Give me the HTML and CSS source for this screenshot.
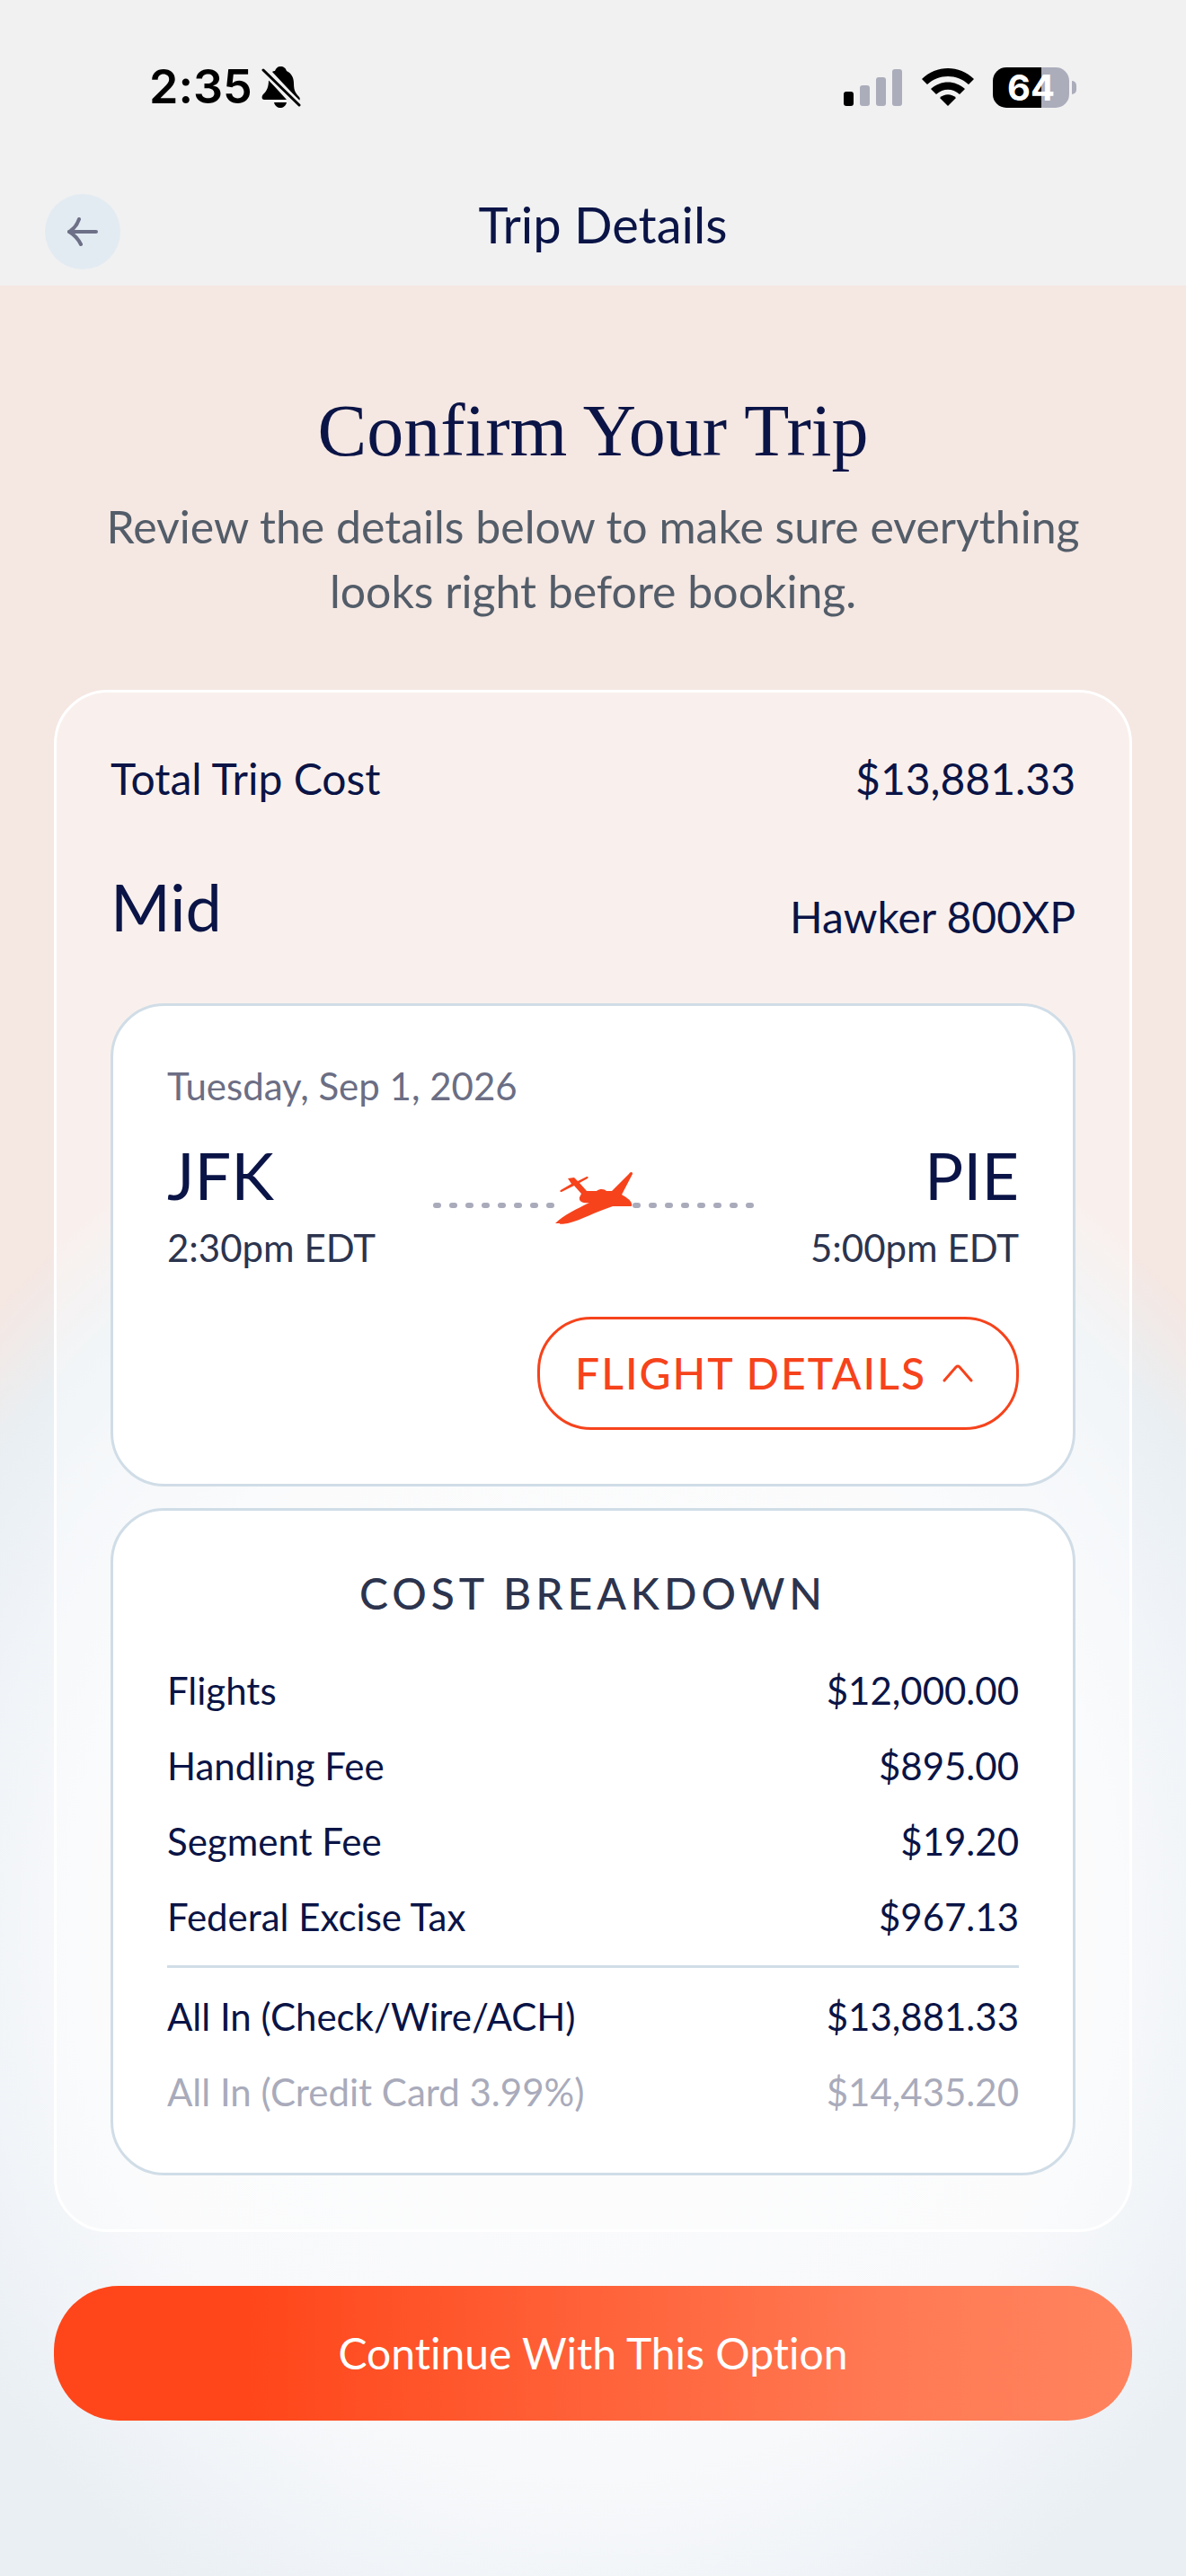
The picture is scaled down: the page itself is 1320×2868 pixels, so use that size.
FILE: index.html
```
<!DOCTYPE html>
<html lang="en">
<head>
    <meta charset="UTF-8">
    <meta name="viewport" content="width=device-width, initial-scale=1.0">
    <title>Trip Details</title>
    <link rel="stylesheet" href="styles.css">
</head>
<body>
    <header class="header">
        <div class="status-bar">
            <div class="status-left">
                <span class="time">2:35</span>
                <svg class="bell" viewBox="0 0 44 46" aria-label="Silent mode">
                    <path d="M21 0c4 0 6 2 7 5 6 3 8 8 8 14 0 8 2 11 6 15 1 1 1 3 0 4L12 6c1-1 2-1 3-1 1-3 3-5 6-5z"/>
                    <path d="M8 15l20 22H3c-3 0-3-4-1-6 4-4 6-8 6-16z"/>
                    <path d="M14 40h14c-1 4-4 6-7 6s-6-2-7-6z"/>
                    <path d="M2 4l40 39" stroke="#f1f1f1" stroke-width="8"/>
                    <path d="M2 4l40 39" stroke="#000" stroke-width="3" stroke-linecap="round"/>
                </svg>
            </div>
            <div class="status-right">
                <svg class="signal" viewBox="0 0 66 42" aria-label="Signal">
                    <rect x="0" y="26" width="11" height="16" rx="3"/>
                    <g fill="#abadbb">
                        <rect x="18" y="19" width="11" height="23" rx="3"/>
                        <rect x="36" y="10" width="11" height="32" rx="3"/>
                        <rect x="54" y="1" width="11" height="41" rx="3"/>
                    </g>
                </svg>
                <svg class="wifi" viewBox="0 0 58 42" aria-label="Wi-Fi">
                    <path d="M0 12C16-4 42-4 58 12l-6 6C39 6 19 6 6 18z"/>
                    <path d="M10 23c11-10 27-10 38 0l-6 6c-8-7-18-7-26 0z"/>
                    <path d="M20 33c5-5 13-5 18 0l-9 9z"/>
                </svg>
                <div class="battery"><span class="battery-level">64</span></div>
            </div>
        </div>
        <nav class="nav">
            <button class="back" type="button" aria-label="Back">
                <svg viewBox="0 0 34 32">
                    <path d="M32 16H2M13 2C11 8 7 13 2 16c5 3 10 8 13 14"/>
                </svg>
            </button>
            <h1 class="nav-title">Trip Details</h1>
        </nav>
    </header>

    <main class="page">
        <h2 class="heading">Confirm Your Trip</h2>
        <p class="intro">Review the details below to make sure everything looks right before booking.</p>

        <section class="trip">
            <div class="row total">
                <span>Total Trip Cost</span>
                <span>$13,881.33</span>
            </div>
            <div class="row aircraft">
                <span class="large">Mid</span>
                <span>Hawker 800XP</span>
            </div>

            <div class="card flight">
                <div class="date">Tuesday, Sep 1, 2026</div>
                <div class="route">
                    <div class="stop">
                        <span class="large">JFK</span>
                        <span class="stop-time">2:30pm EDT</span>
                    </div>
                    <svg class="plane" viewBox="0 0 360 60" aria-label="to">
                        <g fill="none" stroke="#a9abbb" stroke-width="6" stroke-linecap="round" stroke-dasharray="3 15">
                            <path d="M5 37h130M227 37h130"/>
                        </g>
                        <path fill="#f6431c" d="M138 57C148 47 162 41 176 34c-7 1-12-1-11-6l2-4-8-9-14 7c-2 0-2-1-1-2l12-7-4-6 7-1 4 4 10-5c2 0 2 1 1 2l-9 5 8 9h11c4-3 9-2 11 0h6l19-19c1-2 4-3 4 0l-12 23c5 3 10 6 11 10s-1 3-3 3h-18c-19 6-34 15-50 19-5 1-10 1-9 0z"/>
                    </svg>
                    <div class="stop stop-end">
                        <span class="large">PIE</span>
                        <span class="stop-time">5:00pm EDT</span>
                    </div>
                </div>
                <button class="details" type="button">
                    FLIGHT DETAILS
                    <svg viewBox="0 0 34 20"><path d="M2 18L15 3q2-2 4 0l13 15"/></svg>
                </button>
            </div>

            <div class="card costs">
                <h3 class="costs-title">COST BREAKDOWN</h3>
                <table class="costs-table">
                    <tbody>
                        <tr><th scope="row">Flights</th><td>$12,000.00</td></tr>
                        <tr><th scope="row">Handling Fee</th><td>$895.00</td></tr>
                        <tr><th scope="row">Segment Fee</th><td>$19.20</td></tr>
                        <tr><th scope="row">Federal Excise Tax</th><td>$967.13</td></tr>
                    </tbody>
                </table>
                <table class="costs-table totals">
                    <tbody>
                        <tr><th scope="row">All In (Check/Wire/ACH)</th><td>$13,881.33</td></tr>
                        <tr class="muted"><th scope="row">All In (Credit Card 3.99%)</th><td>$14,435.20</td></tr>
                    </tbody>
                </table>
            </div>
        </section>

        <button class="continue" type="button">Continue With This Option</button>
    </main>
</body>
</html>
```
FILE: styles.css
```
* {
    box-sizing: border-box;
}
body {
    margin: 0;
    min-height: 100vh;
    font-family: Lato, "Open Sans", sans-serif;
    font-size: 48px;
    line-height: 60px;
    font-variant-ligatures: none;
    color: #0a1446;
    background:
        radial-gradient(70vw 76vw at 50% 75%, #fcfcfd 0, #f8f9fb 60%, #eff3f7 78%, #e9eff3 88%, rgba(233, 239, 243, 0) 100%),
        linear-gradient(#f5e7e2 53%, #e9eff3 63%);
}
h1, h2, h3, p {
    margin: 0;
    font-weight: normal;
}
button {
    font: inherit;
    cursor: pointer;
}

/* header */
.header {
    background: #f1f1f1;
    padding-bottom: 18px;
}
.status-bar {
    display: flex;
    justify-content: space-between;
    align-items: flex-start;
    height: 216px;
    padding: 64px 130px 0 166px;
    font-family: Inter, sans-serif;
    color: #000;
}
.status-left, .status-right {
    display: flex;
    align-items: center;
    height: 66px;
}
.status-left {
    gap: 10px;
}
.status-right {
    gap: 21px;
}
.time {
    font-size: 52px;
    font-weight: 600;
}
.bell {
    width: 44px;
    height: 46px;
}
.signal {
    width: 66px;
    height: 42px;
}
.wifi {
    width: 58px;
    height: 42px;
}
.battery {
    position: relative;
    width: 85px;
    height: 45px;
    border-radius: 15px;
    background: linear-gradient(90deg, #000 64%, #abadbb 64%);
    color: #fff;
    font-size: 40px;
    font-weight: 700;
    line-height: 45px;
    text-align: center;
}
.battery::after {
    content: "";
    position: absolute;
    right: -8px;
    top: 15px;
    width: 5px;
    height: 15px;
    border-radius: 0 5px 5px 0;
    background: #abadbb;
}
.nav {
    display: grid;
    grid-template-columns: 84px 1fr 62px;
    padding: 0 50px;
}
.back {
    display: flex;
    align-items: center;
    justify-content: center;
    width: 84px;
    height: 84px;
    padding: 0;
    border: none;
    border-radius: 50%;
    background: #e3ebf2;
}
.back svg {
    width: 34px;
    height: 32px;
    fill: none;
    stroke: #6e7088;
    stroke-width: 4;
    stroke-linecap: round;
}
.nav-title {
    font-size: 56px;
    line-height: 68px;
    text-align: center;
}

/* page */
.page {
    padding: 114px 60px 60px;
}
.heading {
    font-family: "Liberation Serif", serif;
    font-size: 82px;
    line-height: 96px;
    font-variant-ligatures: normal;
    text-align: center;
}
.intro {
    margin: 22px 0 74px;
    padding: 0 50px;
    font-size: 50px;
    line-height: 72px;
    color: #535d69;
    text-align: center;
}
.trip {
    padding: 66px 60px 60px;
    border: 3px solid #fff;
    border-radius: 60px;
    background: rgba(255, 255, 255, 0.4);
}
.row {
    display: flex;
    justify-content: space-between;
    align-items: flex-end;
}
.aircraft {
    margin: 70px 0 66px;
}
.large {
    font-size: 72px;
    line-height: 84px;
}
.card {
    padding: 62px 60px 60px;
    border: 3px solid #d0dde7;
    border-radius: 60px;
    background: #fff;
    font-size: 42px;
    line-height: 54px;
}
.flight {
    display: flex;
    flex-direction: column;
}
.date {
    color: #6b6e84;
}
.route {
    display: flex;
    justify-content: space-between;
    margin: 30px 0 50px;
}
.stop {
    display: flex;
    flex-direction: column;
    gap: 12px;
}
.stop-end {
    text-align: right;
}
.stop-time {
    color: #2c344e;
}
.plane {
    width: 360px;
    height: 60px;
    margin-top: 39px;
}
.details {
    display: flex;
    align-items: center;
    align-self: flex-end;
    gap: 18px;
    height: 126px;
    padding: 0 48px 0 39px;
    border: 3px solid #f6431c;
    border-radius: 60px;
    background: none;
    color: #f6431c;
    font-size: 48px;
    font-weight: 500;
    letter-spacing: 2px;
}
.details svg {
    width: 34px;
    height: 20px;
    fill: none;
    stroke: #f6431c;
    stroke-width: 3;
    stroke-linecap: round;
}
.costs {
    margin-top: 24px;
    padding-bottom: 48px;
}
.costs-title {
    margin-bottom: 36px;
    color: #2c344e;
    font-size: 48px;
    font-weight: 500;
    line-height: 60px;
    letter-spacing: 5px;
    text-align: center;
}
.costs-table {
    width: 100%;
    border-collapse: collapse;
}
.costs-table th, .costs-table td {
    height: 84px;
    padding: 0;
    font-weight: normal;
    text-align: left;
}
.costs-table td {
    text-align: right;
}
.totals {
    margin-top: 12px;
    border-top: 3px solid #d0dde7;
    border-collapse: separate;
    border-spacing: 0;
    padding-top: 12px;
}
.muted {
    color: #a9abbb;
}
.continue {
    display: block;
    width: 100%;
    height: 150px;
    margin-top: 60px;
    border: none;
    border-radius: 72px;
    background: linear-gradient(90deg, #ff461a 18%, #ff7a54 78%, #ff835e);
    color: #fff;
}
```
